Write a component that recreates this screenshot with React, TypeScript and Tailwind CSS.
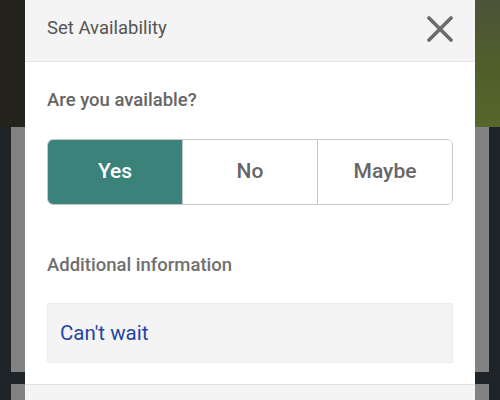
import { useState } from 'react';

const options = ['Yes', 'No', 'Maybe'];

function CloseIcon() {
  return (
    <svg width="26" height="26" viewBox="0 0 26 26" className="block">
      <path d="M2 2 L24 24 M24 2 L2 24" stroke="#6b6b6b" strokeWidth="3.6" strokeLinecap="round" />
    </svg>
  );
}

export default function App() {
  const [choice, setChoice] = useState('Yes');

  return (
    <div
      className="flex h-[400px] w-[500px] overflow-hidden"
      style={{ fontFamily: 'Roboto, "Noto Sans", sans-serif' }}
    >
      {/* backdrop, left side */}
      <div className="flex w-[25px] flex-col">
        <div className="h-[127px] bg-[#23221b]" />
        <div className="flex flex-1">
          <div className="w-[11px] bg-[#1f2429]" />
          <div className="flex flex-1 flex-col">
            <div className="h-[245px] bg-[#828282]" />
            <div className="h-[12px] bg-[#1f2429]" />
            <div className="flex-1 bg-[#828282]" />
          </div>
        </div>
      </div>

      {/* dialog */}
      <div className="flex w-[450px] flex-col bg-white">
        <div className="flex h-[62px] shrink-0 items-center justify-between border-b border-[#e4e4e4] bg-[#f4f4f4] pb-[4px] pl-[22px] pr-[22px]">
          <span className="text-[18.5px] text-[#555555]">Set Availability</span>
          <button className="p-0">
            <CloseIcon />
          </button>
        </div>

        <div className="flex flex-col px-[22px]">
          <p className="mt-[26px] text-[18.5px] font-medium leading-[24px] text-[#666666]">
            Are you available?
          </p>

          <div className="mt-[27px] flex h-[66px] overflow-hidden rounded-[6px] border border-[#c8c8c8]">
            {options.map((opt, i) => (
              <button
                key={opt}
                onClick={() => setChoice(opt)}
                className={`flex flex-1 items-center justify-center text-[21px] font-medium ${
                  i > 0 ? 'border-l border-[#c8c8c8]' : ''
                } ${choice === opt ? 'bg-[#3a827a] text-white' : 'bg-white text-[#666666]'}`}
              >
                {opt}
              </button>
            ))}
          </div>

          <p className="mt-[48px] text-[18.5px] font-medium leading-[24px] text-[#707070]">
            Additional information
          </p>

          <div className="mt-[26px] flex h-[60px] items-center rounded-[2px] border border-[#ececec] bg-[#f4f4f4] px-[12px]">
            <span className="text-[20.5px] text-[#1f45a3]">Can't wait</span>
          </div>
        </div>

        <div className="mt-auto h-[16px] border-t border-[#e2e2e2] bg-[#f4f4f4]" />
      </div>

      {/* backdrop, right side */}
      <div className="flex w-[25px] flex-col">
        <div className="h-[127px] bg-gradient-to-b from-[#4c5338] via-[#4f5e2a] to-[#55672a]" />
        <div className="flex flex-1">
          <div className="flex w-[14px] flex-col">
            <div className="h-[245px] bg-[#828282]" />
            <div className="h-[12px] bg-[#1f2429]" />
            <div className="flex-1 bg-[#828282]" />
          </div>
          <div className="flex-1 bg-[#1f2429]" />
        </div>
      </div>
    </div>
  );
}
